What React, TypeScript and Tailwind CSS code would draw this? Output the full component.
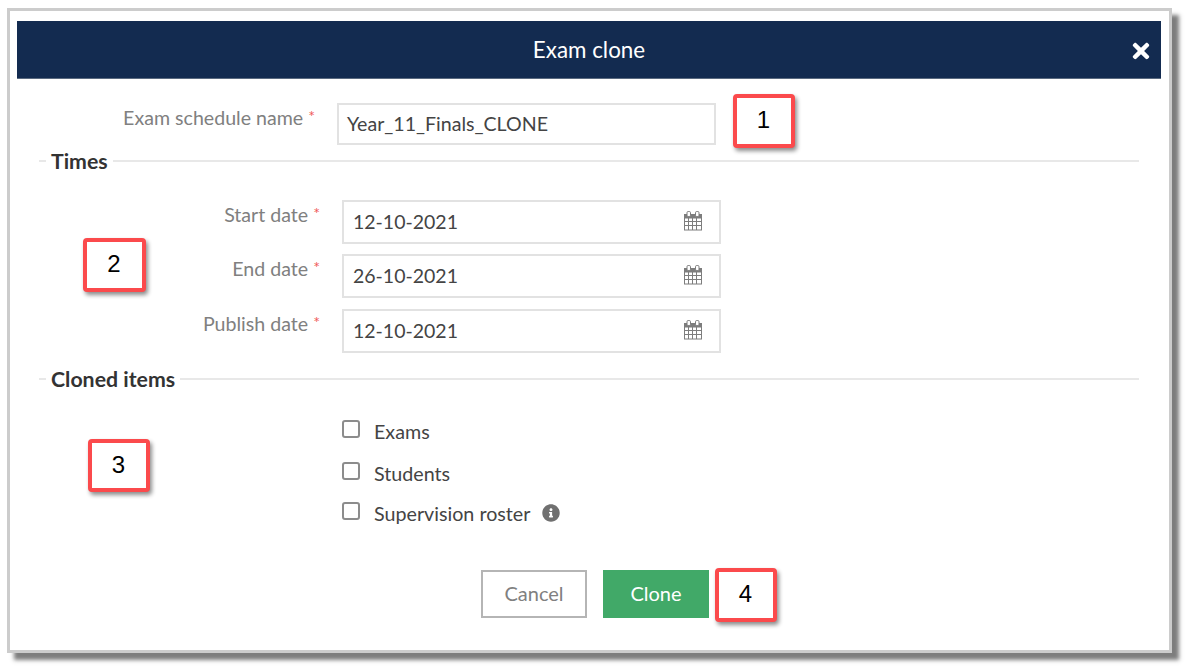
import { FaInfoCircle, FaTimes } from "react-icons/fa";

function CalendarIcon() {
  // thin grid calendar, rings on top
  return (
    <svg width="20" height="20" viewBox="0 0 20 20" className="mt-[-2px] text-[#7d7d7d]">
      <rect x="1.5" y="3.5" width="17" height="15.5" fill="#fff" stroke="currentColor" />
      <rect x="1" y="3" width="18" height="4.5" fill="currentColor" />
      <rect x="4" y="0.5" width="3.5" height="5" rx="1.2" fill="#fff" stroke="currentColor" />
      <rect x="12.5" y="0.5" width="3.5" height="5" rx="1.2" fill="#fff" stroke="currentColor" />
      <path d="M5.5 7v12M9.5 7v12M13.5 7v12M2 10.5h16M2 14.5h16" stroke="currentColor" fill="none" />
    </svg>
  );
}

function Legend({ title, className }: { title: string; className: string }) {
  return (
    <div className={`ml-[22px] mr-[22px] flex items-center ${className}`}>
      <span className="h-[2px] w-[7px] bg-[#e8e8e8]" />
      <span className="px-[5px] text-[21.3px] leading-[24px] font-bold text-[#333]">{title}</span>
      <span className="h-[2px] flex-1 bg-[#e8e8e8]" />
    </div>
  );
}

function DateRow({ label, value, className }: { label: string; value: string; className?: string }) {
  return (
    <div className={`flex h-[44px] ${className ?? ""}`}>
      <div className="w-[303px] pt-[3px] text-right text-[19.6px] leading-[24px] text-[#808080]">
        {label} <span className="relative top-[-3px] text-[16px] text-[#f05a5a]">*</span>
      </div>
      <div className="ml-[22px] flex h-[44px] w-[379px] items-center justify-between border-2 border-[#e2e2e2] pl-[9px] pr-[16px] text-[19.5px] text-[#444]">
        <span>{value}</span>
        <CalendarIcon />
      </div>
    </div>
  );
}

function Check({ label, info, className }: { label: string; info?: boolean; className: string }) {
  return (
    <div className={`ml-[325px] flex items-start ${className}`}>
      <span className="mt-[-2px] block h-[18px] w-[18px] rounded-[3px] border-2 border-[#8c8c8c] bg-white" />
      <span className="ml-[14px] mt-[-2px] text-[19.7px] leading-[24px] text-[#444]">{label}</span>
      {info && <FaInfoCircle className="ml-[12px] mt-[0px] text-[18px] text-[#707070]" />}
    </div>
  );
}

function Callout({ n, className }: { n: number; className: string }) {
  return (
    <div
      className={`absolute flex items-center justify-center rounded-[4px] border-[4px] border-[#fb4a4c] bg-white pb-[2px] pr-[1px] font-['Liberation_Sans'] text-[24px] text-black shadow-[2px_3px_4px_rgba(0,0,0,0.45)] ${className}`}
    >
      {n}
    </div>
  );
}

export default function App() {
  return (
    <div className="h-[668px] w-[1188px] overflow-hidden bg-white pl-[7px] pt-[8px] font-['Lato',sans-serif]">
      <div className="relative h-[645px] w-[1165px] border-[3px] border-[#cccccc] bg-white pl-[7px] pr-[8px] pt-[10px] shadow-[7px_7px_4px_rgba(70,70,70,0.7)]">
        {/* Header */}
        <div className="relative flex h-[58px] items-center justify-center border-b border-[#5a6a80] bg-[#132b50] text-[22.4px] text-white">
          Exam clone
          <FaTimes className="absolute right-[8px] top-[18px] text-[24px]" />
        </div>

        {/* Name */}
        <div className="mt-[24px] flex h-[42px]">
          <div className="w-[298px] pt-[3px] text-right text-[19.6px] leading-[24px] text-[#808080]">
            Exam schedule name <span className="relative top-[-3px] text-[16px] text-[#f05a5a]">*</span>
          </div>
          <div className="ml-[22px] flex w-[379px] items-center border-2 border-[#e2e2e2] pb-[1px] pl-[8px] text-[19.6px] text-[#444]">
            Year_11_Finals_CLONE
          </div>
        </div>

        <Legend title="Times" className="mt-[4px]" />

        <div className="mt-[27px]">
          <DateRow label="Start date" value="12-10-2021" className="mb-[10px]" />
          <DateRow label="End date" value="26-10-2021" className="mb-[11px]" />
          <DateRow label="Publish date" value="12-10-2021" />
        </div>

        <Legend title="Cloned items" className="mt-[14px]" />

        <div className="mt-[31px]">
          <Check label="Exams" className="h-[42px]" />
          <Check label="Students" className="h-[40px]" />
          <Check label="Supervision roster" info className="h-[24px]" />
        </div>

        {/* Buttons */}
        <div className="ml-[464px] mt-[42px] flex gap-[16px]">
          <button className="h-[48px] w-[106px] border-2 border-[#b5b5b5] bg-white pb-[2px] text-[20px] text-[#808080]">Cancel</button>
          <button className="h-[48px] w-[106px] bg-[#41a968] pb-[2px] text-[20px] text-white">Clone</button>
        </div>

        <Callout n={1} className="left-[723px] top-[83px] h-[54px] w-[62px]" />
        <Callout n={2} className="left-[73px] top-[227px] h-[54px] w-[63px]" />
        <Callout n={3} className="left-[78px] top-[428px] h-[53px] w-[62px]" />
        <Callout n={4} className="left-[705px] top-[557px] h-[54px] w-[62px]" />
      </div>
    </div>
  );
}
